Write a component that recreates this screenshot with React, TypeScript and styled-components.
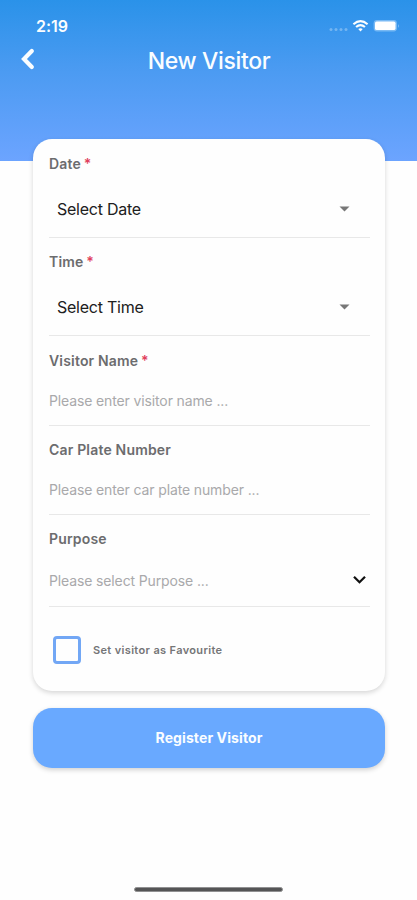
import React from "react";
import styled, { createGlobalStyle } from "styled-components";

const GlobalStyle = createGlobalStyle`
  * { box-sizing: border-box; }
  body { margin: 0; background: #fefefe; font-family: Inter, "Liberation Sans", sans-serif; }
`;

const Screen = styled.main`
  width: 417px;
  height: 900px;
  display: flex;
  flex-direction: column;
  overflow: hidden;
  background: #fefefe;
`;

const Header = styled.header`
  flex: none;
  height: 161px;
  color: #fafdff;
  background: linear-gradient(180deg, #2a92e9 0%, #4c9bf2 45%, #6ca4ff 100%);
`;

const StatusBar = styled.div`
  height: 38px;
  padding: 14px 17px 0 36px;
  display: flex;
  justify-content: space-between;
`;

const Clock = styled.span`
  font-size: 16px;
  line-height: 24px;
  font-weight: 600;
  letter-spacing: -0.05px;
`;

const StatusIcons = styled.div`
  display: flex;
  align-items: center;
  gap: 4px;
  height: 24px;
`;

const TitleBar = styled.div`
  height: 46px;
  display: grid;
  grid-template-columns: 60px 1fr 60px;
  align-items: center;
`;

const BackButton = styled.button`
  height: 40px;
  padding: 0 0 4px 20px;
  border: 0;
  background: none;
  display: flex;
  align-items: center;
`;

const Title = styled.h1`
  margin: 0 0 0 1px;
  text-align: center;
  font-size: 23px;
  line-height: 30px;
  font-weight: 500;
  letter-spacing: -0.35px;
`;

const Card = styled.form`
  flex: none;
  margin: -22px 32px 0 33px;
  height: 552px;
  padding: 1px 15px 0 16px;
  border-radius: 19px;
  background: #fefefe;
  box-shadow: 0 2px 5px rgba(0, 0, 0, 0.16);
`;

const Field = styled.div<{ $top?: number }>`
  padding-top: ${(p) => p.$top ?? 14}px;
  border-bottom: 1px solid #e8e8e8;
`;

const Label = styled.div`
  height: 20px;
  font-size: 14px;
  line-height: 20px;
  font-weight: 600;
  letter-spacing: 0.18px;
  color: #6c6c6e;
`;

const Required = styled.span`
  margin-left: -1px;
  color: #e0405c;
`;

const Picker = styled.div`
  margin-top: 7px;
  height: 56px;
  padding: 0 20px 0 8px;
  display: flex;
  align-items: center;
  justify-content: space-between;
  font-size: 16px;
  letter-spacing: -0.25px;
  color: #202020;
`;

const Entry = styled.div<{ $height?: number }>`
  margin-top: 6px;
  height: ${(p) => p.$height ?? 48}px;
  padding: 0 3px 1px 0;
  display: flex;
  align-items: center;
  justify-content: space-between;
  font-size: 14px;
  letter-spacing: -0.13px;
  color: #a9a9ab;
`;

const FavouriteRow = styled.label`
  margin: 29px 0 0 4px;
  display: flex;
  align-items: center;
  gap: 12px;
  font-size: 11px;
  font-weight: 600;
  letter-spacing: 0.35px;
  color: #757577;
`;

const CheckBox = styled.span`
  width: 28px;
  height: 28px;
  border: 3px solid #72a7f5;
  border-radius: 4px;
`;

const RegisterButton = styled.button`
  flex: none;
  margin: 17px 32px 0 33px;
  height: 60px;
  padding: 0;
  border: 0;
  border-radius: 19px;
  background: #69a9ff;
  box-shadow: 0 2px 5px rgba(0, 0, 0, 0.18);
  color: #fafdff;
  font: 700 14px/20px Inter, "Liberation Sans", sans-serif;
  letter-spacing: 0.1px;
`;

const HomeIndicator = styled.div`
  width: 149px;
  height: 5px;
  margin: auto auto 8px 134px;
  border-radius: 3px;
  background: #555556;
  border: 1px solid #919192;
`;

const SignalDots = () => (
  <svg width="20" height="16" viewBox="0 0 20 16" fill="#fff" opacity="0.3">
    <circle cx="3" cy="11.5" r="1.5" />
    <circle cx="8" cy="11.5" r="1.5" />
    <circle cx="13" cy="11.5" r="1.5" />
    <circle cx="18" cy="11.5" r="1.5" />
  </svg>
);

const Wifi = () => (
  <svg width="17" height="14" viewBox="0 0 18 14" fill="none" stroke="#fafdff" strokeWidth="2.2">
    <path d="M1.5 5.2Q9-1.5 16.5 5.2M4.3 8.1Q9 4 13.7 8.1" />
    <path d="M6.6 10.2Q9 8.3 11.4 10.2L9 12.7Z" fill="#fafdff" stroke="none" />
  </svg>
);

const Battery = () => (
  <svg width="27" height="14" viewBox="0 0 27 14">
    <rect x="0.6" y="1" width="23.4" height="11.4" rx="3.4" fill="#78b9f4" />
    <rect x="2" y="2.5" width="20.5" height="8.6" rx="1.7" fill="#fff" />
    <path d="M25 5Q26.8 7 25 9Z" fill="#8cc4f7" />
  </svg>
);

const BackIcon = () => (
  <svg width="16" height="22" viewBox="0 0 16 22" fill="none" stroke="#fafdff" strokeWidth="4.2">
    <path d="M11.8 3L4 11L11.8 19" strokeLinecap="round" strokeLinejoin="miter" />
  </svg>
);

const Caret = () => (
  <svg width="11" height="6" viewBox="0 0 11 6">
    <path d="M0.5 0.5H10.5L5.5 5.6Z" fill="#777" />
  </svg>
);

const Chevron = () => (
  <svg width="15" height="10" viewBox="0 0 15 10" fill="none" stroke="#111" strokeWidth="2.3">
    <path d="M2 1.8L7.5 7.2L13 1.8" />
  </svg>
);

export default function App() {
  return (
    <>
      <GlobalStyle />
      <Screen>
        <Header>
          <StatusBar>
            <Clock>2:19</Clock>
            <StatusIcons>
              <SignalDots />
              <Wifi />
              <Battery />
            </StatusIcons>
          </StatusBar>
          <TitleBar>
            <BackButton type="button" aria-label="Back"><BackIcon /></BackButton>
            <Title>New Visitor</Title>
          </TitleBar>
        </Header>
        <Card>
          <Field>
            <Label>Date <Required>*</Required></Label>
            <Picker>Select Date<Caret /></Picker>
          </Field>
          <Field>
            <Label>Time <Required>*</Required></Label>
            <Picker>Select Time<Caret /></Picker>
          </Field>
          <Field $top={15}>
            <Label>Visitor Name <Required>*</Required></Label>
            <Entry>Please enter visitor name ...</Entry>
          </Field>
          <Field>
            <Label>Car Plate Number</Label>
            <Entry>Please enter car plate number ...</Entry>
          </Field>
          <Field>
            <Label>Purpose</Label>
            <Entry $height={51}>Please select Purpose ...<Chevron /></Entry>
          </Field>
          <FavouriteRow><CheckBox />Set visitor as Favourite</FavouriteRow>
        </Card>
        <RegisterButton type="button">Register Visitor</RegisterButton>
        <HomeIndicator />
      </Screen>
    </>
  );
}
